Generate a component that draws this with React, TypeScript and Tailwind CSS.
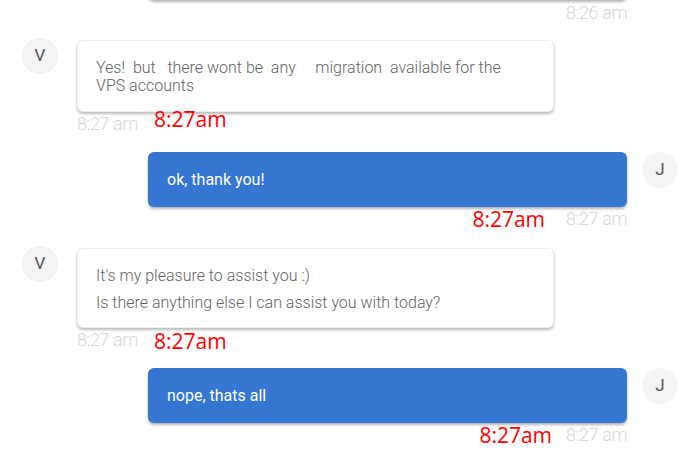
import React from "react";

const roboto = { fontFamily: "Roboto, 'Liberation Sans', sans-serif" };

const Avatar = ({ letter }: { letter: string }) => (
  <div className="w-9 h-9 shrink-0 rounded-full bg-[#f4f4f4] flex items-center justify-center text-[17px] text-[#555]">
    {letter}
  </div>
);

const Stamp = ({ time }: { time: string }) => (
  <span className="text-[18px] leading-[20px] font-light text-[#d6d6d6] tracking-[-0.4px]">{time}</span>
);

const Red = ({ className = "" }: { className?: string }) => (
  <span
    className={"text-[21px] leading-[20px] text-[#ff0000] " + className}
    style={{ fontFamily: "'Open Sans', sans-serif" }}
  >
    8:27am
  </span>
);

const AgentRow = ({
  children,
  pad,
  redClass,
}: {
  children: React.ReactNode;
  pad: string;
  redClass: string;
}) => (
  <div className="flex pl-[22px]">
    <div className="-mt-[2px]">
      <Avatar letter="V" />
    </div>
    <div className="ml-[19px] w-[477px]">
      <div
        className={
          "bg-white border border-[#ececec] rounded-[6px] shadow-[0_2px_3px_rgba(0,0,0,0.28)] pl-[18px] pr-[40px] text-[16px] leading-[18px] font-light text-[#646464] " +
          pad
        }
      >
        {children}
      </div>
      <div className="flex items-start mt-[2px]">
        <Stamp time="8:27 am" />
        <Red className={"ml-[16px] " + redClass} />
      </div>
    </div>
  </div>
);

const UserRow = ({ text, redGap }: { text: string; redGap: string }) => (
  <div className="flex justify-end pr-[12px]">
    <div className="w-[479px]">
      <div className="bg-[#3576d3] rounded-[6px] shadow-[0_2px_3px_rgba(0,0,0,0.3)] px-[19px] py-[18px] text-[16px] leading-[19px] text-white">
        {text}
      </div>
      <div className="flex items-center justify-end mt-[2px]">
        <Red className={redGap} />
        <Stamp time="8:27 am" />
      </div>
    </div>
    <div className="ml-[15px]">
      <Avatar letter="J" />
    </div>
  </div>
);

export default function App() {
  return (
    <div className="w-[690px] h-[456px] overflow-hidden bg-white" style={roboto}>
      {/* previous message, mostly scrolled off */}
      <div className="flex justify-end pr-[63px]">
        <div className="w-[479px]">
          <div className="h-[40px] -mt-[40px] bg-white rounded-[6px] shadow-[0_2px_3px_rgba(0,0,0,0.3)]" />
          <div className="flex justify-end mt-[3px]">
            <Stamp time="8:26 am" />
          </div>
        </div>
      </div>

      <div className="mt-[17px]">
        <AgentRow pad="pt-[18px] pb-[16px]" redClass="-mt-[5px]">
          <p className="whitespace-pre-wrap">Yes!  but   there wont be  any     migration  available for the VPS accounts</p>
        </AgentRow>
      </div>

      <div className="mt-[18px]">
        <UserRow text="ok, thank you!" redGap="mr-[21px]" />
      </div>

      <div className="mt-[19px]">
        <AgentRow pad="pt-[18px] pb-[15px]" redClass="mt-[1px]">
          <p>It&apos;s my pleasure to assist you :)</p>
          <p className="mt-[9px]">Is there anything else I can assist you with today?</p>
        </AgentRow>
      </div>

      <div className="mt-[17px]">
        <UserRow text="nope, thats all" redGap="mr-[14px]" />
      </div>
    </div>
  );
}
